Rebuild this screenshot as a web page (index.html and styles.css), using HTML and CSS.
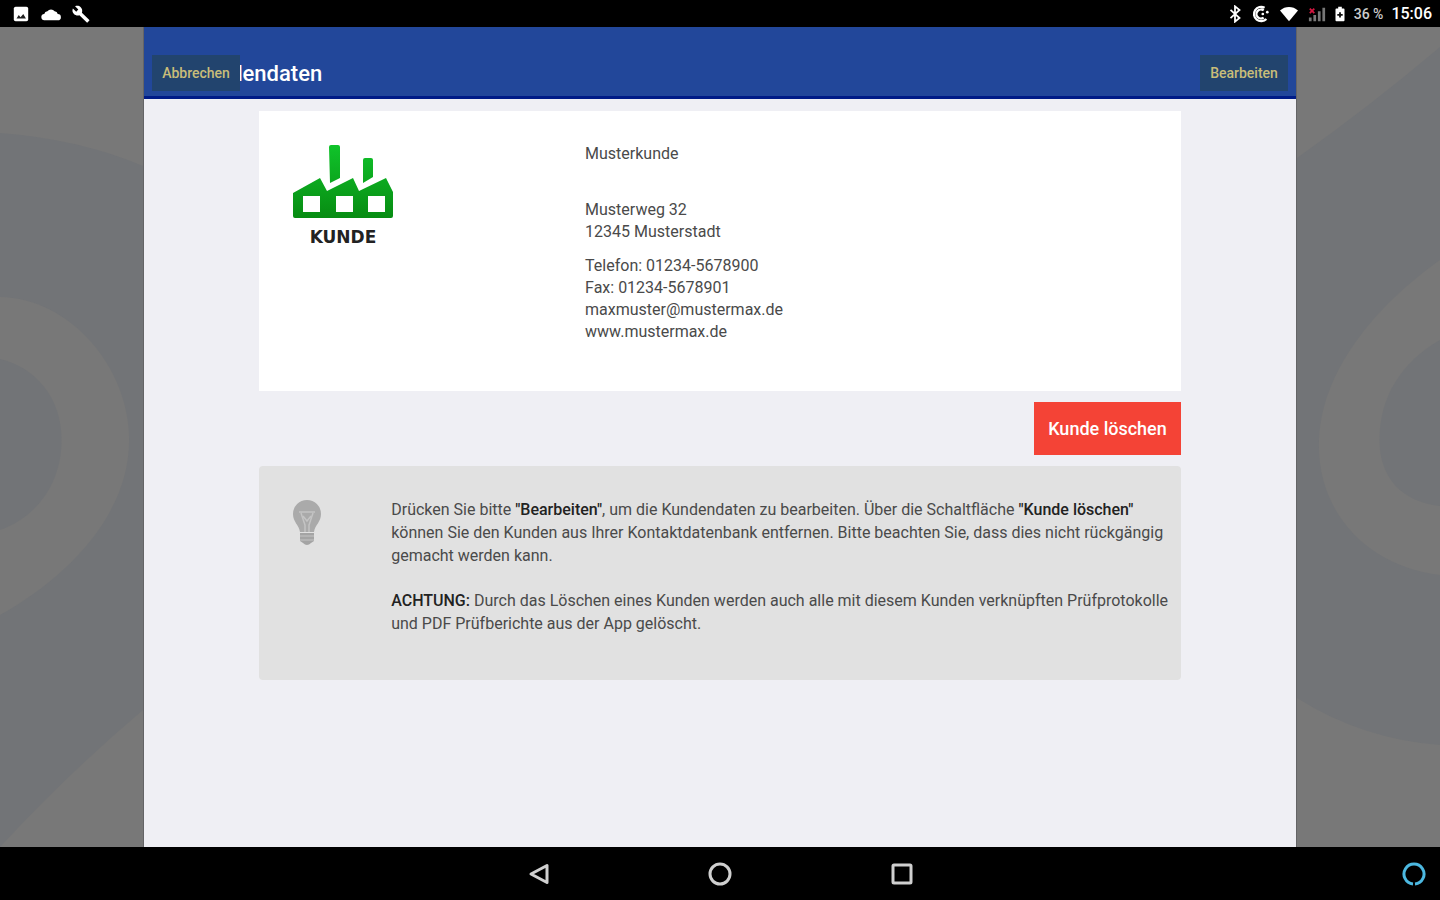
FILE: index.html
```html
<!DOCTYPE html>
<html lang="de">
<head>
    <meta charset="UTF-8">
    <meta name="viewport" content="width=device-width, initial-scale=1.0">
    <title>Kundendaten</title>
    <link rel="stylesheet" href="styles.css">
</head>
<body>
    <div class="status-bar">
        <div class="status-group notifications">
            <svg class="status-icon" viewBox="0 0 20 20"><path fill="#fff" d="M4 2h12a2 2 0 0 1 2 2v12a2 2 0 0 1-2 2H4a2 2 0 0 1-2-2V4c0-1 1-2 2-2z"/><path fill="#222" d="M5 15l2.500-4 2 2.500 3-3.500 3 5z"/></svg>
            <svg class="status-icon cloud" viewBox="0 0 22 20"><path fill="#fff" d="M4 17a3.500 3.500 0 0 1-.5-7A4 4 0 0 1 7 7a5 5 0 0 1 8 0 4 4 0 0 1 3.500 3 3.500 3.500 0 0 1 0 7z"/></svg>
            <svg class="status-icon" viewBox="0 0 20 20"><path fill="#fff" d="M19 16.500l-8-8c.8-2 .3-4.300-1.300-6C8 .8 5.500.5 3.400 1.400L7 5 4.700 7.400 1 3.800C0 5.900.5 8.400 2.200 10c1.600 1.600 4 2.100 6 1.300l8 8c.4.4.9.4 1.200 0l1.700-1.700c.4-.3.4-.8-.1-1.100z"/></svg>
        </div>
        <div class="status-group">
            <svg class="status-icon" viewBox="0 0 20 20"><path fill="none" stroke="#fff" stroke-width="2" d="M5 5.500l10 9-5 4v-17l5 4-10 9"/></svg>
            <svg class="status-icon" viewBox="0 0 20 20"><path fill="none" stroke="#fff" stroke-width="2.500" d="M16 15.500a8 8 0 1 1-2-12.500M13 6a5 5 0 1 0 0 8"/><circle cx="12" cy="10" r="1.500" fill="#fff"/><circle cx="17" cy="8" r="1.500" fill="#fff"/></svg>
            <svg class="status-icon wifi" viewBox="0 0 22 20"><path fill="#fff" d="M1 6c6-5 14-5 20 0L11 18z"/></svg>
            <svg class="status-icon" viewBox="0 0 20 20"><path fill="#777" d="M1 18v-4h3v4zM6 18v-7h3v7zM11 18V7h3v11zM16 18V3h3v15z"/><path stroke="#d41640" stroke-width="2" d="M2 4l5 5M7 4L2 9"/></svg>
            <svg class="status-icon battery" viewBox="0 0 12 20"><path fill="#fff" d="M4 2h4v2h2a1 1 0 0 1 1 1v12a1 1 0 0 1-1 1H2a1 1 0 0 1-1-1V5a1 1 0 0 1 1-1h2z"/><path stroke="#111" stroke-width="2" d="M6 8v6M3 11h6"/></svg>
            <span class="percent">36 %</span>
            <span class="clock">15:06</span>
        </div>
    </div>

    <div class="screen">
        <svg class="wallpaper wallpaper-left" viewBox="0 0 144 820" preserveAspectRatio="none">
            <path fill="#727477" d="M0 106Q80 112 144 139V683Q70 745 0 820z"/>
            <path fill="#787878" d="M0 270C70 271 130 340 130 413C130 490 65 552 0 588z"/>
            <path fill="#727477" d="M0 332C35 340 62 370 62 413C62 458 35 491 0 503z"/>
        </svg>

        <div class="panel">
            <header>
                <h1>Kundendaten</h1>
                <button class="header-button cancel">Abbrechen</button>
                <button class="header-button edit">Bearbeiten</button>
            </header>

            <main>
                <section class="customer-card">
                    <svg class="customer-logo" viewBox="0 0 104 104" role="img" aria-label="Kunde">
                        <defs>
                            <linearGradient id="green" x1="0" y1="0" x2="0" y2="76" gradientUnits="userSpaceOnUse">
                                <stop offset="0" stop-color="#10c52b"/>
                                <stop offset="1" stop-color="#078b12"/>
                            </linearGradient>
                        </defs>
                        <path fill="url(#green)" d="M38 4q0-2 2-2h7q2 0 2 2v31l-10 5zM72 17q0-2 2-2h6q2 0 2 2v17l-10 6z"/>
                        <path fill="url(#green)" fill-rule="evenodd" d="M2 50L29 35l7 13 26-13 6 13 27-13 7 14v24q0 2-2 2H4q-2 0-2-2zM12 53v16h17V53zM45 53v16h17V53zM77 53v16h17V53z"/>
                        <text x="52" y="100" text-anchor="middle">KUNDE</text>
                    </svg>
                    <address>
                        <p class="name">Musterkunde</p>
                        <p>Musterweg 32<br>12345 Musterstadt</p>
                        <p>Telefon: 01234-5678900<br>Fax: 01234-5678901<br>maxmuster@mustermax.de<br>www.mustermax.de</p>
                    </address>
                </section>

                <button class="delete-button">Kunde löschen</button>

                <section class="hint">
                    <svg class="bulb" viewBox="0 0 32 48">
                        <path fill="#aaa" d="M16 2a14 14 0 0 1 14 14c0 8-6 11-7 18H9C8 27 2 24 2 16A14 14 0 0 1 16 2z"/>
                        <path fill="none" stroke="#c4c4c4" stroke-width="1.500" d="M8 14h16M10 15l4 12v7M22 15l-4 12v7M12 18l4 5 4-5"/>
                        <path fill="#a4a4a4" d="M9 35h14v8l-3 2q-4 4-8 0l-3-2z"/>
                        <path stroke="#c4c4c4" stroke-width="1" d="M9 38h14M9 42h14"/>
                    </svg>
                    <div class="hint-text">
                        <p>Drücken Sie bitte <strong>"Bearbeiten"</strong>, um die Kundendaten zu bearbeiten. Über die Schaltfläche <strong>"Kunde löschen"</strong> können Sie den Kunden aus Ihrer Kontaktdatenbank entfernen. Bitte beachten Sie, dass dies nicht rückgängig gemacht werden kann.</p>
                        <p><strong>ACHTUNG:</strong> Durch das Löschen eines Kunden werden auch alle mit diesem Kunden verknüpften Prüfprotokolle und PDF Prüfberichte aus der App gelöscht.</p>
                    </div>
                </section>
            </main>
        </div>

        <svg class="wallpaper wallpaper-right" viewBox="0 0 144 820" preserveAspectRatio="none">
            <path fill="#727477" d="M0 131Q75 78 144 20V718Q65 712 0 671z"/>
            <path fill="#787878" d="M144 233C80 278 22 345 22 418C22 490 75 540 144 548z"/>
            <path fill="#727477" d="M144 313C105 335 83 370 83 413C83 450 105 475 144 479z"/>
        </svg>
    </div>

    <nav class="nav-bar">
        <button class="nav-button" aria-label="Zurück"><svg viewBox="0 0 24 24"><path d="M21 3.500v17L5 12z"/></svg></button>
        <button class="nav-button" aria-label="Startseite"><svg viewBox="0 0 24 24"><circle cx="12" cy="12" r="10"/></svg></button>
        <button class="nav-button" aria-label="Übersicht"><svg viewBox="0 0 24 24"><rect x="3" y="3" width="18" height="18" rx="1"/></svg></button>
        <button class="nav-button assistant" aria-label="Assistent"><svg viewBox="0 0 24 24"><path d="M11 22A10 10 0 1 1 13 22"/></svg></button>
    </nav>
</body>
</html>
```
FILE: styles.css
```css
* {
    margin: 0;
    padding: 0;
    box-sizing: border-box;
}

body {
    min-height: 100vh;
    display: flex;
    flex-direction: column;
    background-color: #000;
    color: #4a4a4a;
    font-family: Roboto, "Liberation Sans", sans-serif;
    font-size: 16px;
    line-height: 22px;
}

button {
    border: none;
    font-family: inherit;
    cursor: pointer;
}

.status-bar {
    height: 27px;
    padding: 0 8px 0 12px;
    display: flex;
    justify-content: space-between;
    align-items: center;
    color: #fff;
}

.status-group {
    display: flex;
    align-items: center;
    gap: 8px;
}

.notifications {
    gap: 10px;
}

.status-icon {
    width: 18px;
    height: 18px;
}

.cloud,
.wifi {
    width: 22px;
}

.battery {
    width: 12px;
}

.percent {
    color: #ccc;
    font-size: 14px;
    font-weight: 500;
}

.clock {
    font-size: 16px;
    font-weight: 500;
}

.screen {
    flex: 1;
    display: grid;
    grid-template-columns: 1fr 8fr 1fr;
    background-color: #787878;
}

.wallpaper {
    width: 100%;
    height: 100%;
}

.wallpaper-left {
    border-right: 1px solid #646466;
}

.wallpaper-right {
    border-left: 1px solid #646466;
}

.panel {
    background-color: #efeff4;
}

header {
    position: relative;
    height: 72px;
    padding: 24px 8px 0 48px;
    display: flex;
    align-items: center;
    background-color: #22479a;
    border-bottom: 3px solid #001b87;
}

h1 {
    color: #fff;
    font-size: 22px;
    font-weight: 500;
}

/* The buttons float over the title */
.header-button {
    position: absolute;
    top: 28px;
    width: 88px;
    height: 36px;
    background-color: #22446e;
    color: #c9bd79;
    font-size: 14px;
    font-weight: 500;
}

.cancel {
    left: 8px;
}

.edit {
    right: 8px;
}

main {
    width: 80%;
    margin: 0 auto;
    padding: 12px 0;
    display: flex;
    flex-direction: column;
    gap: 11px;
}

.customer-card {
    min-height: 280px;
    padding: 32px;
    display: grid;
    grid-template-columns: 1fr 2fr;
    column-gap: 12px;
    background-color: #fff;
}

.customer-logo {
    width: 104px;
    height: 104px;
}

.customer-logo text {
    fill: #222;
    font-family: "DejaVu Sans", sans-serif;
    font-size: 17px;
    font-weight: 700;
}

address {
    font-style: normal;
}

address p {
    margin-bottom: 12px;
}

address .name {
    margin-bottom: 34px;
}

.delete-button {
    align-self: flex-end;
    height: 53px;
    padding: 0 14px;
    background-color: #f44336;
    color: #fff;
    font-size: 18px;
    font-weight: 500;
}

.hint {
    min-height: 214px;
    padding: 32px 8px 32px 32px;
    display: flex;
    gap: 68px;
    border-radius: 4px;
    background-color: #e1e1e1;
    line-height: 23px;
}

.bulb {
    flex: none;
    width: 32px;
    height: 48px;
}

.hint-text p + p {
    margin-top: 22px;
}

strong {
    color: #222;
    font-weight: 500;
}

.nav-bar {
    position: relative;
    height: 53px;
    display: flex;
    justify-content: center;
    align-items: center;
    gap: 158px;
}

.nav-button {
    width: 24px;
    height: 24px;
    background: none;
}

.nav-button svg {
    display: block;
    width: 24px;
    height: 24px;
    fill: none;
    stroke: #d0d0d0;
    stroke-width: 3;
    stroke-linejoin: round;
}

.assistant {
    position: absolute;
    right: 14px;
}

.assistant svg {
    stroke: #4cb8e0;
}
```
